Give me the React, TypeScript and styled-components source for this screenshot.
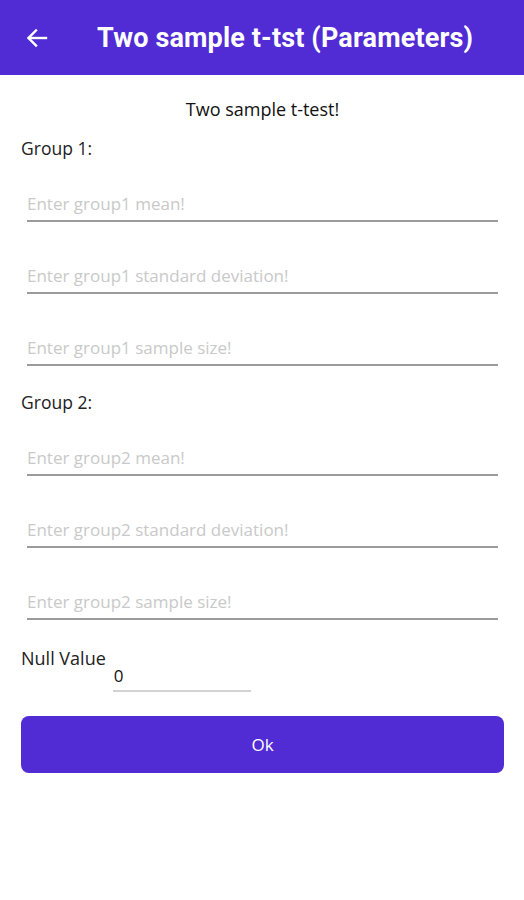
import React from 'react';
import styled, { createGlobalStyle } from 'styled-components';

const GlobalStyle = createGlobalStyle`
  html, body {
    margin: 0;
    padding: 0;
    background: #fff;
    font-family: "Open Sans", "Noto Sans", sans-serif;
  }
`;

const Page = styled.div`
  width: 524px;
  min-height: 900px;
  background: #fff;
`;

const Header = styled.header`
  height: 75px;
  background: #512bd4;
  display: flex;
  align-items: center;
  padding: 0 0 0 24px;
  box-sizing: border-box;
  gap: 47px;
`;

const BackButton = styled.div`
  width: 26px;
  height: 26px;
  display: flex;
  align-items: center;
  justify-content: center;
  color: #fff;
`;

const Title = styled.h1`
  margin: 0;
  color: #fff;
  font-family: Roboto, "Liberation Sans", sans-serif;
  font-weight: 700;
  font-size: 27px;
  letter-spacing: 0.15px;
`;

const Content = styled.main`
  padding: 22px 20px 0 21px;
  display: flex;
  flex-direction: column;
`;

const Subtitle = styled.div`
  text-align: center;
  font-size: 18px;
  line-height: 25px;
  color: #111;
  margin-bottom: 14px;
`;

const GroupLabel = styled.div<{ $top?: number }>`
  font-size: 17.5px;
  line-height: 24px;
  color: #222;
  margin-top: ${(p) => p.$top ?? 0}px;
  margin-bottom: 14px;
`;

const Field = styled.input<{ $first?: boolean }>`
  display: block;
  box-sizing: border-box;
  height: 48px;
  margin: ${(p) => (p.$first ? 0 : 24)}px 6px 0 6px;
  padding: 12px 0 0 0;
  border: none;
  border-bottom: 2px solid #9b9b9b;
  outline: none;
  background: transparent;
  font-family: "Open Sans", "Noto Sans", sans-serif;
  font-size: 17px;
  color: #222;

  &::placeholder {
    color: #c9c9c9;
  }
`;

const NullRow = styled.div`
  display: flex;
  align-items: flex-start;
  margin-top: 26px;
`;

const NullLabel = styled.div`
  font-size: 18px;
  line-height: 24px;
  color: #222;
  margin-right: 7px;
`;

const NullInput = styled.input`
  box-sizing: border-box;
  width: 138px;
  height: 38px;
  margin-top: 8px;
  padding: 8px 0 2px 1px;
  border: none;
  border-bottom: 2px solid #d2d2d2;
  outline: none;
  background: transparent;
  font-family: "Open Sans", "Noto Sans", sans-serif;
  font-size: 17px;
  color: #111;
`;

const OkButton = styled.button`
  margin-top: 24px;
  height: 57px;
  border: none;
  border-radius: 8px;
  background: #512bd4;
  color: #fff;
  font-family: "Open Sans", "Noto Sans", sans-serif;
  font-size: 17px;
  cursor: pointer;
`;

const BackArrow = () => (
  <svg width="24" height="24" viewBox="0 0 24 24" fill="none" stroke="#fff" strokeWidth="2.4" strokeLinecap="square">
    <path d="M21 12H4" />
    <path d="M11 4.5L3.5 12l7.5 7.5" />
  </svg>
);

const App: React.FC = () => {
  return (
    <Page>
      <GlobalStyle />
      <Header>
        <BackButton>
          <BackArrow />
        </BackButton>
        <Title>Two sample t-tst (Parameters)</Title>
      </Header>
      <Content>
        <Subtitle>Two sample t-test!</Subtitle>

        <GroupLabel>Group 1:</GroupLabel>
        <Field $first placeholder="Enter group1 mean!" />
        <Field placeholder="Enter group1 standard deviation!" />
        <Field placeholder="Enter group1 sample size!" />

        <GroupLabel $top={24}>Group 2:</GroupLabel>
        <Field $first placeholder="Enter group2 mean!" />
        <Field placeholder="Enter group2 standard deviation!" />
        <Field placeholder="Enter group2 sample size!" />

        <NullRow>
          <NullLabel>Null Value</NullLabel>
          <NullInput defaultValue="0" />
        </NullRow>

        <OkButton>Ok</OkButton>
      </Content>
    </Page>
  );
};

export default App;
